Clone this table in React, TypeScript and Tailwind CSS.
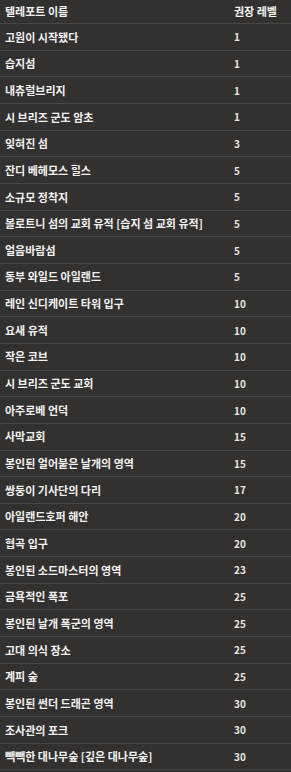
const rows: [string, number][] = [
  ['고원이 시작됐다', 1],
  ['습지섬', 1],
  ['내츄럴브리지', 1],
  ['시 브리즈 군도 암초', 1],
  ['잊혀진 섬', 3],
  ['잔디 베헤모스 힐스', 5],
  ['소규모 정착지', 5],
  ['볼로트니 섬의 교회 유적 [습지 섬 교회 유적]', 5],
  ['얼음바람섬', 5],
  ['동부 와일드 아일랜드', 5],
  ['레인 신디케이트 타워 입구', 10],
  ['요새 유적', 10],
  ['작은 코브', 10],
  ['시 브리즈 군도 교회', 10],
  ['아주로베 언덕', 10],
  ['사막교회', 15],
  ['봉인된 얼어붙은 날개의 영역', 15],
  ['쌍둥이 기사단의 다리', 17],
  ['아일랜드호퍼 해안', 20],
  ['협곡 입구', 20],
  ['봉인된 소드마스터의 영역', 23],
  ['금욕적인 폭포', 25],
  ['봉인된 날개 폭군의 영역', 25],
  ['고대 의식 장소', 25],
  ['계피 숲', 25],
  ['봉인된 썬더 드래곤 영역', 30],
  ['조사관의 포크', 30],
  ['빽빽한 대나무숲 [깊은 대나무숲]', 30],
];

export default function App() {
  return (
    <div
      className="w-[291px] h-[772px] bg-[#32312f] text-[#f2f2f2] overflow-hidden"
      style={{ fontFamily: '"Noto Sans CJK KR", "Noto Sans", sans-serif' }}
    >
      <div className="flex items-center h-[24px] border-b border-[#474644] font-bold text-[11px]">
        <div className="flex-1 pl-[5px]">텔레포트 이름</div>
        <div className="w-[57px]">권장 레벨</div>
      </div>
      {rows.map(([name, lvl]) => (
        <div key={name} className="flex items-center h-[26.67px] border-b border-[#474644]">
          <div className="flex-1 pl-[5px] text-[11px] font-bold whitespace-nowrap">{name}</div>
          <div className="w-[57px] text-[10px] font-bold text-[#e6e6e6]">{lvl}</div>
        </div>
      ))}
    </div>
  );
}
